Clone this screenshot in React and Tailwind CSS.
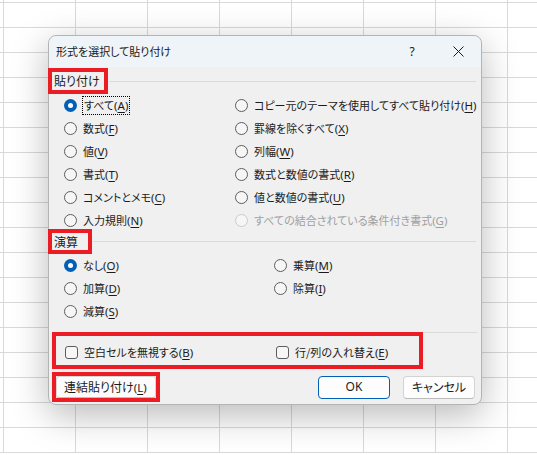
import React from 'react'

const pasteLeft = [
  { t: 'すべて', k: 'A', checked: true, focus: true },
  { t: '数式', k: 'F' },
  { t: '値', k: 'V' },
  { t: '書式', k: 'T' },
  { t: 'コメントとメモ', k: 'C' },
  { t: '入力規則', k: 'N' },
]

const pasteRight = [
  { t: 'コピー元のテーマを使用してすべて貼り付け', k: 'H' },
  { t: '罫線を除くすべて', k: 'X' },
  { t: '列幅', k: 'W' },
  { t: '数式と数値の書式', k: 'R' },
  { t: '値と数値の書式', k: 'U' },
  { t: 'すべての結合されている条件付き書式', k: 'G', disabled: true },
]

const opsLeft = [
  { t: 'なし', k: 'O', checked: true },
  { t: '加算', k: 'D' },
  { t: '減算', k: 'S' },
]

const opsRight = [
  { t: '乗算', k: 'M' },
  { t: '除算', k: 'I' },
]

function Radio({ checked, disabled }) {
  if (checked) {
    return (
      <span className="w-[13px] h-[13px] rounded-full bg-[#005fb8] flex items-center justify-center shrink-0">
        <span className="w-[5px] h-[5px] rounded-full bg-white" />
      </span>
    )
  }
  return (
    <span
      className={`w-[13px] h-[13px] rounded-full border shrink-0 bg-[#f6f6f6] ${
        disabled ? 'border-[#cacaca]' : 'border-[#5d5d5d]'
      }`}
    />
  )
}

// access key in parens, latin part set in a Segoe-like face
function Label({ t, k }) {
  return (
    <>
      {t}
      <span className="font-['Noto_Sans',sans-serif] text-[11.5px]">
        (<span className="underline underline-offset-2 decoration-1">{k}</span>)
      </span>
    </>
  )
}

function RadioRow({ item }) {
  return (
    <div className="h-[23px] flex items-center gap-[6px]">
      <Radio checked={item.checked} disabled={item.disabled} />
      <span
        className={`whitespace-nowrap leading-[16px] ${item.disabled ? 'text-[#a0a0a0]' : 'text-[#1b1b1b]'} ${
          item.focus ? 'border border-dotted border-black px-px -mx-px' : ''
        }`}
      >
        <Label t={item.t} k={item.k} />
      </span>
    </div>
  )
}

function Header({ text, w }) {
  return (
    <div className="flex items-center -ml-px">
      <div className={`${w} border-4 border-[#ec1c24] flex items-center pl-[2px] text-[12px] text-[#1b1b1b] whitespace-nowrap`}>{text}</div>
      <div className="flex-1 h-px bg-[#dadada] ml-px mr-[5px]" />
    </div>
  )
}

function Checkbox({ t, k }) {
  return (
    <div className="flex items-center gap-[6px] h-[22px]">
      <span className="w-[13px] h-[13px] rounded-[3px] border border-[#5d5d5d] bg-[#f6f6f6] shrink-0" />
      <span className="whitespace-nowrap text-[#1b1b1b]">
        <Label t={t} k={k} />
      </span>
    </div>
  )
}

function SheetGrid() {
  const cols = Array.from({ length: 8 })
  const rows = Array.from({ length: 18 })
  const Row = ({ h }) => (
    <div className={`flex ${h} border-b border-[#d9d9d9]`}>
      <div className="w-[4px] shrink-0 border-r border-[#d9d9d9]" />
      {cols.map((_, i) => (
        <div key={i} className="w-[72px] shrink-0 border-r border-[#d9d9d9]" />
      ))}
    </div>
  )
  return (
    <div className="flex flex-col">
      <Row h="h-[3px]" />
      {rows.map((_, i) => (
        <Row key={i} h="h-[25px]" />
      ))}
    </div>
  )
}

export default function App() {
  return (
    <div className="relative w-[537px] h-[455px] overflow-hidden bg-white font-['Noto_Sans_CJK_JP','Noto_Sans',sans-serif] text-[11px] [font-feature-settings:'palt']">
      <SheetGrid />

      <div className="absolute left-[48px] top-[35px] w-[434px] h-[370px] rounded-lg border border-[#b4b4b4] bg-[#f0f0f0] shadow-[0_10px_36px_rgba(0,0,0,0.28)] flex flex-col">
        <div className="h-[31px] shrink-0 rounded-t-lg bg-[#eef4f7] flex items-center">
          <span className="pl-[7px] flex-1 text-[#1a1a1a] text-[11px]">形式を選択して貼り付け</span>
          <span className="w-[46px] text-center text-[12px] font-['Noto_Sans',sans-serif] text-[#1a1a1a]">?</span>
          <span className="w-[46px] flex justify-center">
            <svg width="11" height="11" viewBox="0 0 11 11" className="text-[#1a1a1a]">
              <path d="M0.5 0.5 L10.5 10.5 M10.5 0.5 L0.5 10.5" stroke="currentColor" strokeWidth="1" fill="none" />
            </svg>
          </span>
        </div>

        <div className="mt-px">
          <Header text="貼り付け" w="w-[60px] h-[26px]" />
        </div>

        <div className="grid grid-cols-[171px_1fr] pl-[15px]">
          <div className="flex flex-col">
            {pasteLeft.map((it) => (
              <RadioRow key={it.k} item={it} />
            ))}
          </div>
          <div className="flex flex-col">
            {pasteRight.map((it) => (
              <RadioRow key={it.k} item={it} />
            ))}
          </div>
        </div>

        <div className="-mt-[3px]">
          <Header text="演算" w="w-[44px] h-[25px]" />
        </div>

        <div className="grid grid-cols-[210px_1fr] pl-[15px]">
          <div className="flex flex-col">
            {opsLeft.map((it) => (
              <RadioRow key={it.k} item={it} />
            ))}
          </div>
          <div className="flex flex-col">
            {opsRight.map((it) => (
              <RadioRow key={it.k} item={it} />
            ))}
          </div>
        </div>

        <div className="mt-[9px] ml-[9px] mr-[4px] h-px bg-[#dadada]" />
        <div className="-mt-px ml-[3px] w-[371px] h-[37px] border-4 border-[#ec1c24] grid grid-cols-[211px_1fr] items-center pl-[9px] pt-[4px]">
          <Checkbox t="空白セルを無視する" k="B" />
          <Checkbox t="行/列の入れ替え" k="E" />
        </div>

        <div className="mt-[3px] flex items-center pl-[3px] pr-[6px]">
          <div className="border-4 border-[#ec1c24]">
            <button className="h-[22px] w-[100px] bg-[#fbfbfb] border border-[#d6d6d6] border-b-[#bdbdbd] rounded-[3px] text-left pl-[7px] text-[12px] text-[#1b1b1b]">
              <Label t="連結貼り付け" k="L" />
            </button>
          </div>
          <div className="flex-1" />
          <button className="h-[23px] w-[72px] bg-[#fdfdfd] border border-[#005fb8] rounded-[4px] text-[12px] font-['Noto_Sans',sans-serif] text-[#1b1b1b]">OK</button>
          <button className="ml-[13px] h-[23px] w-[72px] bg-[#fdfdfd] border border-[#d3d3d3] border-b-[#bcbcbc] rounded-[4px] text-[12px] text-[#1b1b1b]">
            キャンセル
          </button>
        </div>
      </div>
    </div>
  )
}
